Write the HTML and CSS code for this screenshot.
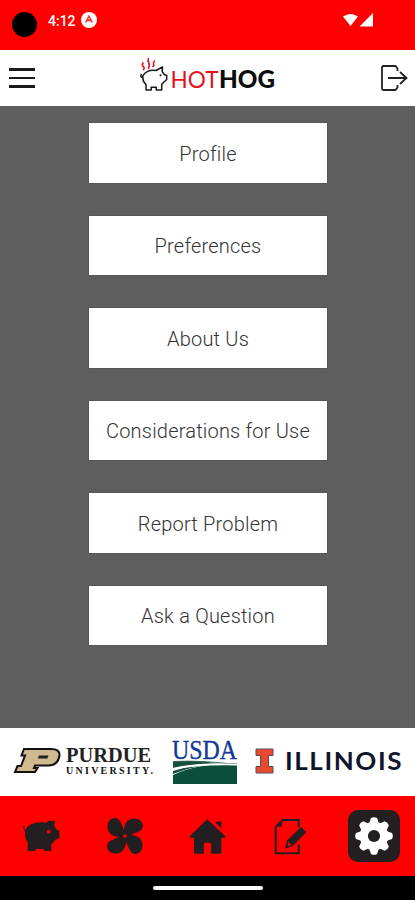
FILE: index.html
```html
<!DOCTYPE html>
<html lang="en">
<head>
  <meta charset="UTF-8">
  <meta name="viewport" content="width=device-width, initial-scale=1">
  <title>HotHog</title>
  <link rel="stylesheet" href="styles.css">
</head>
<body>

  <div class="status-bar">
    <span class="camera"></span>
    <span class="time">4:12</span>
    <svg class="status-app" viewBox="0 0 16 16">
      <circle cx="8" cy="8" r="8" fill="#fff"/>
      <path d="M4.6 10.5L8 4l3.4 6.5M6.3 9.2l1.7-1.4 1.7 1.4" fill="none" stroke="#f33" stroke-width="1.5"/>
    </svg>
    <svg class="signal" viewBox="0 0 32 14">
      <path d="M1 3.500Q8.500-1.500 16 3.500L8.500 13z M31 0v13.500H17.500z" fill="#fff"/>
    </svg>
  </div>

  <div class="header">
    <button class="menu"><span></span><span></span><span></span></button>
    <svg class="brand" viewBox="0 0 138 40">
      <g fill="none" stroke="#e3141c" stroke-width="1.600" stroke-linecap="round">
        <path d="M3 6q-1.500 2 .3 3.600t0 3M8.500 1.500q-1 2 .2 4t-.2 6M14.500 4q-1.500 1.500-.8 3t-.7 2.500"/>
      </g>
      <path d="M3 18.500C6 14 11 12.700 16 13.500L22.500 10l-.3 4.500 2 3 2.500 1v4l-3.500 3.200-1.500 1.800v5.500h-5.500v-2.700h-5V33H6v-5.500Q2 24 3 18.500zM3 20.500Q-.5 20 1.500 17" fill="none" stroke="#1a1a1a" stroke-width="1.500" stroke-linejoin="round"/>
      <circle cx="20.500" cy="18.300" r="1" fill="#1a1a1a"/>
      <text class="hot" x="30.500" y="31" textLength="48" lengthAdjust="spacingAndGlyphs">HOT</text>
      <text class="hog" x="79" y="31" textLength="56" lengthAdjust="spacingAndGlyphs">HOG</text>
    </svg>
    <svg class="logout" viewBox="0 0 28 28">
      <path d="M17.500 7V4.500L15.500 2H3.500Q2 2 2 3.500v21q0 1.500 1.500 1.500h12l2-2.500V21M8 14h18M20 8l6.500 6-6.500 6" fill="none" stroke="#222" stroke-width="1.800"/>
    </svg>
  </div>

  <div class="main">
    <button class="item">Profile</button>
    <button class="item">Preferences</button>
    <button class="item">About Us</button>
    <button class="item">Considerations for Use</button>
    <button class="item">Report Problem</button>
    <button class="item">Ask a Question</button>
  </div>

  <div class="partners">
    <svg class="purdue" viewBox="0 -8 142 44">
      <path d="M11 1h27q9 0 8.500 6.500-1.500 10-11.500 10H22l-1 2.500h3.500L22 24H2l2.500-6H8l4-10.500H8.500z" fill="#cfb991" stroke="#111" stroke-width="2"/>
      <path d="M26 7.500h9.500l-1.200 3h-9.500z" fill="#222"/>
      <text class="purdue-name" x="53" y="14" textLength="85" lengthAdjust="spacingAndGlyphs">PURDUE</text>
      <text class="purdue-sub" x="53" y="25.500" textLength="87">UNIVERSITY.</text>
    </svg>
    <svg class="usda" viewBox="-1 -10 68 66">
      <text class="usda-name" x="0" y="19.500" textLength="65" lengthAdjust="spacingAndGlyphs">USDA</text>
      <path d="M1 22.500q24-1.500 47 2Q20 24 1 29zM1 32Q22 25 41 25.500 20 27 1 35z" fill="#174f3c"/>
      <path d="M1 36Q26 24 65 24v21H1z" fill="#0b4e3a"/>
      <path d="M1 22.500Q30 21 65 25.500" fill="none" stroke="#235a46" stroke-width=".8"/>
      <path d="M1 30Q26 24.500 65 25.500" fill="none" stroke="#fff" stroke-width="1.800"/>
    </svg>
    <svg class="illinois" viewBox="0 -8 150 42">
      <path d="M1 1h17v6.500h-4.500v11H18V25H1v-6.500h4.500v-11H1z" fill="#e8492d" stroke="#5b4a5c" stroke-width="1"/>
      <text class="illinois-name" x="30" y="22" textLength="118" lengthAdjust="spacingAndGlyphs">ILLINOIS</text>
    </svg>
  </div>

  <div class="nav">
    <a class="tab">
      <svg class="pig" viewBox="72 75 111 99">
        <path d="M78 93q-6 6 2 11 8-15 25-19 20-6 39-2l2-5 23-1-4 12q3 9 7 14l9 4v22l-12 5q-4 8-12 14v20h-22v-5l-16-2-10 2v5H86v-27q-9-9-8-31l-5-12 1-6z" fill="#231f20"/>
        <circle cx="149" cy="110" r="5.500" fill="#f00"/>
      </svg>
    </a>
    <a class="tab">
      <svg class="fan" viewBox="-54 -54 108 108">
        <g fill="#231f20">
          <path id="blade" d="M-2-8C-5-22 0-46 18-51C39-58 58-42 53-26C49-11 28-11 10 2z"/>
          <use href="#blade" transform="rotate(90)"/>
          <use href="#blade" transform="rotate(180)"/>
          <use href="#blade" transform="rotate(270)"/>
          <circle r="13"/>
        </g>
        <circle r="5.500" fill="#f00"/>
      </svg>
    </a>
    <a class="tab">
      <svg class="home" viewBox="118 68 112 110">
        <path d="M173 71l56 52-4 4h-9v44q0 4-4 4h-27v-27q0-6-5-6h-12q-5 0-5 6v27h-26q-4 0-4-4v-44h-9l-5-4z M196 79l20-2v21z" fill="#231f20"/>
      </svg>
    </a>
    <a class="tab">
      <svg class="edit" viewBox="42 66 100 112">
        <path d="M117 94V72H69L47 94v79h70v-27" fill="none" stroke="#231f20" stroke-width="6"/>
        <path d="M66 70v22H46z" fill="#231f20"/>
        <path d="M124 93l16 15-40 42-25 9 7-26z" fill="#231f20"/>
        <path d="M85 138l10 10-13 5z" fill="#f00"/>
        <path d="M83 147l5 6-9 2z" fill="#231f20"/>
      </svg>
    </a>
    <a class="tab">
      <span class="active">
        <svg class="gear" viewBox="-56 -56 112 112">
          <g fill="#fff">
            <circle r="42"/>
            <path id="teeth" d="M-14-38L-9-53Q0-58 9-53L14-38V38L9 53Q0 58-9 53L-14 38z"/>
            <use href="#teeth" transform="rotate(45)"/>
            <use href="#teeth" transform="rotate(90)"/>
            <use href="#teeth" transform="rotate(135)"/>
          </g>
          <circle r="18" fill="#231f20"/>
        </svg>
      </span>
    </a>
  </div>

  <div class="gesture"><span></span></div>

</body>
</html>
```
FILE: styles.css
```css
body {
  margin: 0;
  height: 900px;
  display: flex;
  flex-direction: column;
  font-family: Roboto, sans-serif;
  background-color: #5e5e5e;
  overflow: hidden;
}

button {
  border: none;
  padding: 0;
  font-family: inherit;
  background: none;
  cursor: pointer;
}

svg {
  display: block;
}

.status-bar {
  height: 50px;
  box-sizing: border-box;
  padding: 12px 41px 0 12px;
  display: flex;
  align-items: flex-start;
  background-color: #f00;
  color: #fff;
}

.camera {
  width: 25px;
  height: 25px;
  border-radius: 50%;
  background-color: #000;
}

.time {
  margin-left: 11px;
  width: 28px;
  font-size: 14px;
  line-height: 18px;
  font-weight: 500;
}

.status-app {
  width: 16px;
  height: 16px;
  margin-left: 5px;
}

.signal {
  width: 32px;
  height: 14px;
  margin: 1px 0 0 auto;
}

.header {
  height: 56px;
  box-sizing: border-box;
  padding: 0 7px 0 9px;
  display: flex;
  align-items: center;
  justify-content: space-between;
  background-color: #fff;
}

.menu {
  width: 26px;
  display: flex;
  flex-direction: column;
  gap: 6px;
}

.menu span {
  width: 26px;
  height: 2.7px;
  background-color: #1a1a1a;
}

.brand {
  width: 138px;
  height: 40px;
  margin: 0 0 2px 2px;
}

.hot,
.hog {
  font-family: Lato, sans-serif;
  font-size: 24px;
}

.hot {
  fill: #e3141c;
}

.hog {
  font-weight: 900;
  fill: #0c0c0c;
}

.logout {
  width: 28px;
  height: 28px;
}

.main {
  height: 622px;
  box-sizing: border-box;
  padding-top: 17px;
  display: flex;
  flex-direction: column;
  align-items: center;
  gap: 33px;
  background-color: #5e5e5e;
}

.item {
  width: 238px;
  height: 59.5px;
  padding: 2px 0 0 1px;
  background-color: #fff;
  color: #333;
  font-size: 20px;
  font-weight: 300;
  letter-spacing: 0.2px;
  white-space: nowrap;
  box-shadow: 0 0 1px #333;
}

.partners {
  height: 68px;
  box-sizing: border-box;
  padding: 0 10px 0 13px;
  display: flex;
  align-items: center;
  justify-content: space-between;
  background-color: #fff;
}

.purdue {
  width: 142px;
  height: 44px;
}

.purdue-name {
  font-family: "Liberation Serif", serif;
  font-size: 21px;
  font-weight: bold;
  fill: #222;
}

.purdue-sub {
  font-family: "Liberation Serif", serif;
  font-size: 10px;
  font-weight: bold;
  fill: #111;
}

.usda {
  width: 68px;
  height: 66px;
}

.usda-name {
  font-family: "Liberation Serif", serif;
  font-size: 28px;
  fill: #143a94;
  stroke: #143a94;
  stroke-width: 0.4px;
}

.illinois {
  width: 150px;
  height: 42px;
  margin-bottom: 2px;
}

.illinois-name {
  font-family: Lato, sans-serif;
  font-size: 25px;
  font-weight: 700;
  letter-spacing: 1.5px;
  fill: #10152c;
}

.nav {
  height: 80px;
  display: grid;
  grid-template-columns: repeat(5, 1fr);
  background-color: #f00;
}

.tab {
  display: flex;
  align-items: center;
  justify-content: center;
}

.pig {
  width: 37px;
  height: 33px;
}

.fan {
  width: 36px;
  height: 36px;
}

.home {
  width: 37px;
  height: 37px;
}

.edit {
  width: 33px;
  height: 37px;
}

.active {
  width: 52px;
  height: 52px;
  border-radius: 10px;
  display: flex;
  align-items: center;
  justify-content: center;
  background-color: #231f20;
}

.gear {
  width: 38px;
  height: 38px;
}

.gesture {
  height: 24px;
  display: flex;
  align-items: center;
  justify-content: center;
  background-color: #000;
}

.gesture span {
  width: 110px;
  height: 4px;
  border-radius: 2px;
  background-color: #fff;
}
```
